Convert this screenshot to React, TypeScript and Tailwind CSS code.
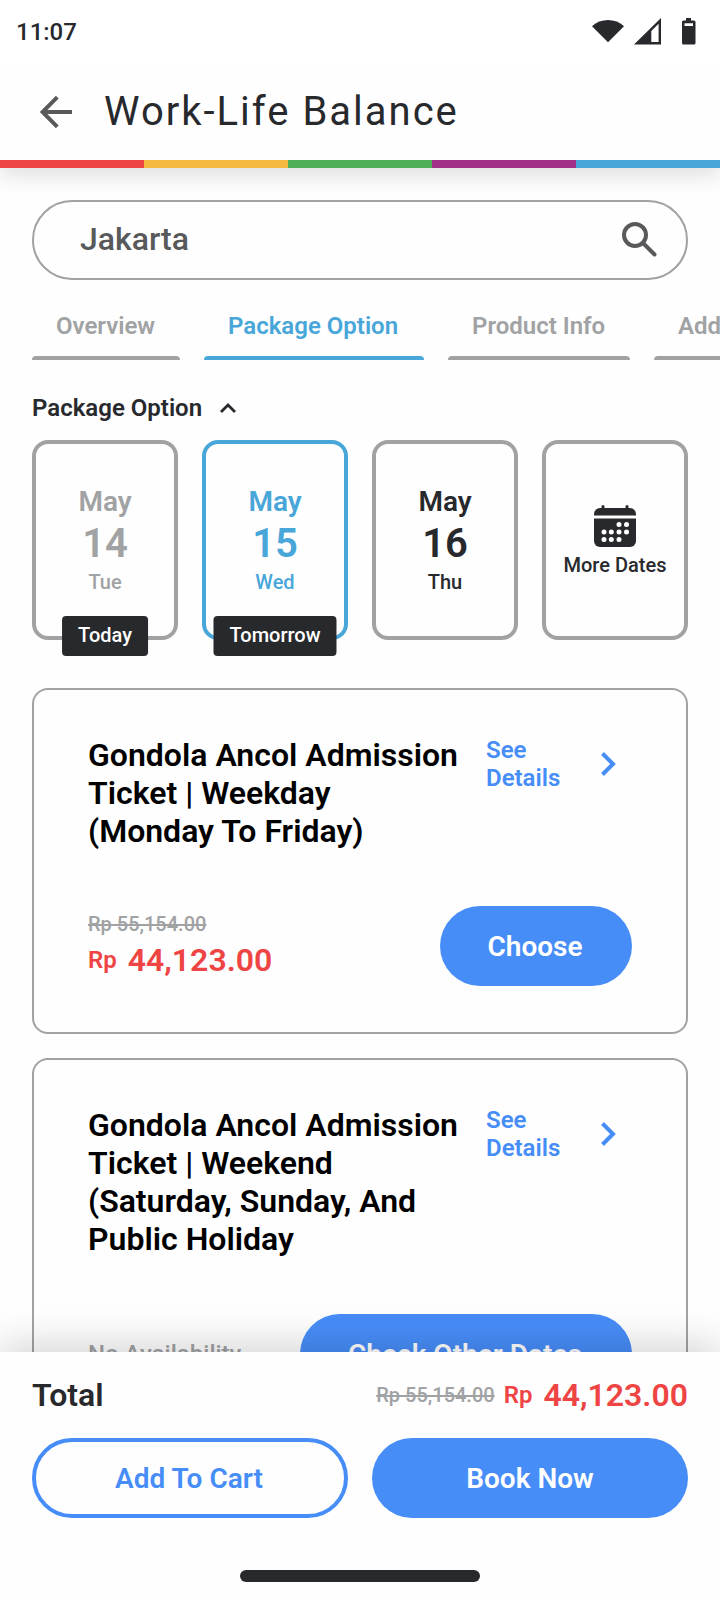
import { useState } from 'react';
import clsx from 'clsx';

const STRIPES = ['bg-[#ee4444]', 'bg-[#f5b942]', 'bg-[#4fae58]', 'bg-[#a23088]', 'bg-[#48a6d9]'];

const TABS = [
    { label: 'Overview', width: 'w-[148px]' },
    { label: 'Package Option', width: 'w-[220px]' },
    { label: 'Product Info', width: 'w-[182px]' },
    { label: 'Add On', width: 'w-[128px]' },
];

const DATES = [
    { month: 'May', day: '14', weekday: 'Tue', tag: 'Today', disabled: true },
    { month: 'May', day: '15', weekday: 'Wed', tag: 'Tomorrow' },
    { month: 'May', day: '16', weekday: 'Thu' },
];

function StatusBar() {
    return (
        <div className="relative z-20 flex h-16 shrink-0 items-center justify-between bg-white pl-4 pr-5">
            <span className="text-[24px] leading-7 font-medium">11:07</span>
            <svg width="108" height="64" viewBox="592 0 108 64" fill="#28292d">
                <path d="M592 26.3C600.500 18 615.500 18 624 26.300L608 42.300Z" />
                <path fillRule="evenodd" d="M634 44.500L661 18V44.500ZM651.300 31V42H658.600V23.800Z" />
                <path fillRule="evenodd" d="M686 18h5v2.500h3q1.500 0 1.500 1.500v21q0 1.500-1.500 1.500h-10.500q-1.500 0-1.500-1.500V22q0-1.500 1.500-1.500h2.500zM684.500 23.300v2.700h8.500v-2.700z" />
            </svg>
        </div>
    );
}

function Header() {
    return (
        <header className="relative z-10 shrink-0 bg-[#fefefe] shadow-[0_8px_20px_rgba(0,0,0,0.12)]">
            <div className="flex h-24 items-center gap-8 pl-10">
                <svg width="32" height="32" viewBox="0 0 32 32" fill="none" stroke="#58595b" strokeWidth="4">
                    <path d="M32 16H3M17.300 1.200L2.500 16L17.300 30.800" />
                </svg>
                <h1 className="text-[40px] leading-[48px] font-normal tracking-[2px]">Work-Life Balance</h1>
            </div>
            <div className="grid h-2 grid-cols-5">
                {STRIPES.map((color) => (
                    <div key={color} className={color} />
                ))}
            </div>
        </header>
    );
}

function CalendarIcon() {
    const dots = [
        [25, 19.5], [32.500, 19.5],
        [10, 27], [17.300, 27], [25, 27], [32.500, 27],
        [10, 34.500], [17.300, 34.500], [25, 34.500],
    ];
    return (
        <svg width="42" height="42" viewBox="0 0 42 42" fill="#28292d">
            <path d="M7.500 3V1.500a1.500 1.500 0 0 1 3 0V3h21V1.500a1.500 1.500 0 0 1 3 0V3H36a6 6 0 0 1 6 6v1.500H0V9a6 6 0 0 1 6-6z" />
            <path d="M0 13.500h42V36a6 6 0 0 1-6 6H6a6 6 0 0 1-6-6z" />
            {dots.map(([x, y]) => (
                <circle key={`${x}-${y}`} cx={x} cy={y} r="2.500" fill="#fff" />
            ))}
        </svg>
    );
}

function Price({ value }: { value: string }) {
    return (
        <div className="flex items-center gap-[11px] text-[#ef4444]">
            <span className="text-[24px] leading-7 font-[560]">Rp</span>
            <span className="text-[32px] leading-[38px] font-[560]">{value}</span>
        </div>
    );
}

function PackageCard({ title, available }: { title: string; available: boolean }) {
    return (
        <div className="shrink-0 rounded-2xl border-2 border-[#a1a2a3] px-[54px] py-[46px]">
            <div className="flex items-start">
                <h2 className="w-[382px] text-[32px] leading-[38px] font-[560] whitespace-pre-line text-black">{title}</h2>
                <button className="ml-4 flex items-center text-left text-[#478df8]">
                    <span className="w-20 text-[24px] leading-7 font-[560]">See Details</span>
                    <svg className="ml-[35px]" width="15" height="24" viewBox="0 0 15 24" fill="none" stroke="currentColor" strokeWidth="4">
                        <path d="M1.500 1.500L12 12L1.500 22.500" />
                    </svg>
                </button>
            </div>
            <div className="mt-14 flex h-20 items-center justify-between">
                {available ? (
                    <div className="-mt-px">
                        <div className="text-[20px] leading-6 font-medium text-[#a1a2a3] line-through">Rp 55,154.00</div>
                        <div className="mt-[5px]"><Price value="44,123.00" /></div>
                    </div>
                ) : (
                    <span className="text-[24px] leading-7 font-medium text-[#a1a2a3]">No Availability</span>
                )}
                <button
                    className={clsx(
                        'h-20 rounded-full bg-[#478df8] pt-0.5 pr-0.5 text-[28px] font-[560] text-white',
                        available ? 'w-48' : 'w-[332px]',
                    )}
                >
                    {available ? 'Choose' : 'Check Other Dates'}
                </button>
            </div>
        </div>
    );
}

function BottomBar() {
    return (
        <footer className="relative z-10 h-[248px] shrink-0 bg-[#fefefe] px-8 shadow-[0_-8px_36px_rgba(0,0,0,0.16)]">
            <div className="flex h-[86px] items-center justify-between">
                <span className="text-[32px] leading-[38px] font-[560]">Total</span>
                <div className="flex items-center gap-[9px]">
                    <span className="text-[20px] leading-6 font-medium text-[#a1a2a3] line-through">Rp 55,154.00</span>
                    <Price value="44,123.00" />
                </div>
            </div>
            <div className="grid grid-cols-2 gap-6 text-[28px]">
                <button className="h-20 rounded-full border-4 border-[#478df8] pt-0.5 pr-0.5 font-[560] text-[#478df8]">Add To Cart</button>
                <button className="h-20 rounded-full bg-[#478df8] pt-0.5 font-[560] text-white">Book Now</button>
            </div>
            {/* Gesture handle */}
            <div className="mx-auto mt-[52px] h-3 w-60 rounded-full bg-[#28292d]" />
        </footer>
    );
}

export default function App() {
    const [tab, setTab] = useState('Package Option');
    const [selected, setSelected] = useState('15');

    return (
        <div className="flex h-[1600px] w-[720px] flex-col overflow-hidden bg-[#fefefe] font-[Roboto,sans-serif] text-[#28292d]">
            <StatusBar />
            <Header />

            <main className="flex min-h-0 flex-1 flex-col overflow-hidden px-8 pt-8">
                <div className="flex h-20 shrink-0 items-center justify-between rounded-full border-2 border-[#a1a2a3] pr-[29px] pb-0.5 pl-[46px]">
                    <span className="text-[32px] leading-[38px] font-medium text-[#58595b]">Jakarta</span>
                    <svg width="35" height="35" viewBox="0 0 35 35" fill="none" stroke="#58595b" strokeWidth="4">
                        <circle cx="13" cy="13" r="11" />
                        <path d="M21.500 21.500L32.500 32.500" strokeLinecap="round" />
                    </svg>
                </div>

                {/* Section tabs */}
                <div className="flex h-20 shrink-0 gap-6">
                    {TABS.map(({ label, width }) => (
                        <button
                            key={label}
                            onClick={() => setTab(label)}
                            className={clsx('flex shrink-0 flex-col justify-end text-left text-[24px] font-[560]', width, tab === label ? 'text-[#48a6d9]' : 'text-[#a1a2a3]')}
                        >
                            <span className="mb-4 w-full pl-6 leading-7 whitespace-nowrap">{label}</span>
                            <span className="h-1 w-full rounded-t bg-current" />
                        </button>
                    ))}
                </div>

                <div className="mt-[34px] flex shrink-0 items-center gap-[18px]">
                    <span className="text-[24px] leading-7 font-[560]">Package Option</span>
                    <svg width="16" height="10" viewBox="0 0 16 10" fill="none" stroke="currentColor" strokeWidth="2.800">
                        <path d="M1 9L8 2L15 9" />
                    </svg>
                </div>

                <div className="mt-[18px] grid h-[200px] shrink-0 grid-cols-4 gap-6">
                    {DATES.map((d) => (
                        <button
                            key={d.day}
                            onClick={() => setSelected(d.day)}
                            className={clsx(
                                'relative flex flex-col items-center rounded-2xl border-4 pt-[42px]',
                                selected === d.day ? 'border-[#48a6d9] text-[#48a6d9]' : 'border-[#a1a2a3]',
                                d.disabled && 'text-[#a1a2a3]',
                            )}
                        >
                            <span className="text-[28px] leading-8 font-[560]">{d.month}</span>
                            <span className="mt-0.5 text-[40px] leading-[47px] font-[560]">{d.day}</span>
                            <span className="mt-[3px] text-[20px] leading-6 font-medium">{d.weekday}</span>
                            {d.tag && (
                                <span className="absolute -bottom-5 left-1/2 flex h-10 -translate-x-1/2 items-center rounded bg-[#28292d] px-4 pb-0.5 text-[20px] font-medium text-white">
                                    {d.tag}
                                </span>
                            )}
                        </button>
                    ))}
                    <button className="flex flex-col items-center rounded-2xl border-4 border-[#a1a2a3] pt-[61px]">
                        <CalendarIcon />
                        <span className="mt-1.5 text-[20px] leading-6 font-medium whitespace-nowrap">More Dates</span>
                    </button>
                </div>

                <div className="mt-12 flex shrink-0 flex-col gap-6">
                    <PackageCard title={'Gondola Ancol Admission\nTicket | Weekday\n(Monday To Friday)'} available />
                    <PackageCard title={'Gondola Ancol Admission\nTicket | Weekend\n(Saturday, Sunday, And\nPublic Holiday'} available={false} />
                </div>
            </main>

            <BottomBar />
        </div>
    );
}
